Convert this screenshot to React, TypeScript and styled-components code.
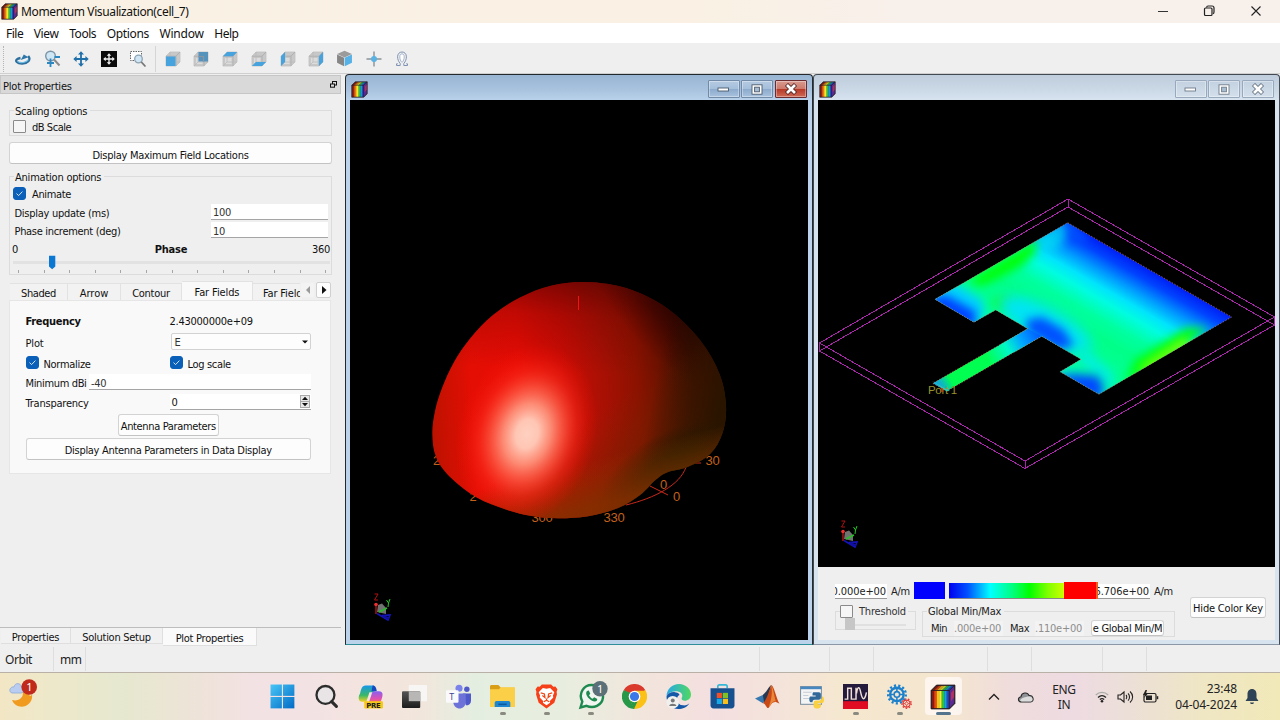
import React from "react";
import styled, { createGlobalStyle, css } from "styled-components";

const GlobalStyle = createGlobalStyle`
  * { box-sizing: border-box; }
  body { margin: 0; overflow: hidden; background: #efefef; }
  svg { display: block; flex: none; }
`;

const tahoma = css`font-family: "DejaVu Sans Condensed", "Liberation Sans", sans-serif; font-size: 11px;`;
const segoe = css`font-family: "Noto Sans", "Open Sans", sans-serif; font-size: 12px;`;

const Desktop = styled.div`
  width: 1280px; height: 720px; display: flex; flex-direction: column;
  background: #efefef; color: #111; overflow: hidden; white-space: nowrap;
  ${tahoma} letter-spacing: -0.27px;
`;

/* ---------- shared text ---------- */
const Text = styled.span<{ $ls?: number; $bold?: boolean }>`
  letter-spacing: ${(p) => p.$ls ?? -0.27}px;
  font-weight: ${(p) => (p.$bold ? 700 : 400)};
  line-height: 14px; padding-top: 2px;
`;

/* ---------- title, menu and tool bars ---------- */
const TitleBar = styled.header`
  height: 23px; flex: none; display: flex; align-items: center; padding: 0 0 0 1px;
  background: linear-gradient(90deg, #f9f1e3 0%, #faf1e4 54%, #f8f0ea 70%, #f8f0eb 100%);
  ${segoe}
`;
const TitleText = styled.span`margin-left: 3px; letter-spacing: -0.37px; flex: 1;`;
const Caption = styled.div`display: flex; gap: 34px; padding-right: 17px; margin-top: -1px;`;
const MenuBar = styled.nav`
  height: 20px; flex: none; display: flex; align-items: center; background: #fff;
  padding-left: 6px; gap: 10.5px; ${segoe}
`;
const MenuItem = styled.span<{ $ls: number }>`letter-spacing: ${(p) => p.$ls}px; line-height: 20px; padding-top: 2px;`;
const ToolBar = styled.div`
  height: 31px; flex: none; display: flex; align-items: center; padding: 1px 0 0 3px;
  border-bottom: 1px solid #cfcfcf;
`;
const Grip = styled.i`width: 1px; height: 26px; border-left: 1px dotted #b5b5b5; margin-right: 5px;`;
const ToolButton = styled.span`
  width: 28.7px; height: 24px; display: flex; align-items: center; justify-content: center;
`;
const ToolSep = styled.i`width: 1px; height: 26px; background: #d5d5d5; margin: 0 2.5px 0 2.5px;`;

/* ---------- left dock ---------- */
const Main = styled.main`height: 571px; flex: none; display: flex;`;
const Dock = styled.aside`
  width: 345px; flex: none; display: flex; flex-direction: column;
  & ${Text} { padding-top: 4px; }
  & button { padding-top: 4px; }
`;
const DockTitle = styled.div`
  width: 341px; height: 19px; margin-top: 1px; display: flex; align-items: center; justify-content: space-between;
  background: #d9d9d9; border: 1px solid #c6c6c6; padding: 0 3px 0 2px;
`;
const DockBody = styled.div`width: 323px; margin: 10px 0 0 9px; height: 523px; flex: none; display: flex; flex-direction: column;`;
const Group = styled.section<{ $h: number }>`
  height: ${(p) => p.$h}px; flex: none; display: flex; flex-direction: column; position: relative;
  &::before { content: ""; position: absolute; inset: 6px 0 0 0; border: 1px solid #dcdcdc; }
  & > * { position: relative; }
`;
const Legend = styled.div<{ $ls?: number }>`
  align-self: flex-start; margin-left: 5px; padding: 0 3px 0 1px; height: 14px; line-height: 15px;
  background: #efefef; letter-spacing: ${(p) => p.$ls ?? -0.22}px;
`;
const CheckRow = styled.label<{ $gap?: number; $h?: number }>`
  display: flex; align-items: center; gap: ${(p) => p.$gap ?? 6}px; height: ${(p) => p.$h ?? 16}px; padding-left: 4px;
`;
const Box = styled.span<{ $on?: boolean }>`
  width: 13px; height: 13px; flex: none; border-radius: ${(p) => (p.$on ? 3 : 1)}px;
  background: ${(p) => (p.$on ? "#0a5fb8" : "#f6f6f6")};
  border: 1px solid ${(p) => (p.$on ? "#0a5fb8" : "#8a8a8a")};
  display: flex; align-items: center; justify-content: center;
`;
const Button = styled.button<{ $w: number; $h?: number }>`
  width: ${(p) => p.$w}px; height: ${(p) => p.$h ?? 22}px; flex: none; padding: 2px 0 0; ${tahoma}
  letter-spacing: -0.27px; color: #111; background: #fdfdfd; border: 1px solid #d3d3d3; border-bottom-color: #c3c3c3;
  border-radius: 3px; display: flex; align-items: center; justify-content: center; overflow: hidden;
  & > ${Text} { padding: 0; }
`;
const Spaced = styled.div<{ $top: number }>`margin-top: ${(p) => p.$top}px; display: flex; justify-content: center;`;
const FieldRow = styled.div<{ $h: number }>`
  height: ${(p) => p.$h}px; flex: none; display: flex; align-items: center; justify-content: space-between; padding: 0 4px 0 5.5px;
`;
const Field = styled.div<{ $w: number; $h?: number }>`
  width: ${(p) => p.$w}px; height: ${(p) => p.$h ?? 16}px; background: #fff; border-bottom: 1px solid #a5a5a5;
  display: flex; align-items: center; padding: 3px 0 0 2px; color: #333;
`;
const PhaseRow = styled.div`
  height: 18px; flex: none; display: grid; grid-template-columns: 1fr auto 1fr; align-items: center; padding: 0 2px 0 3px;
  & > :last-child { justify-self: end; }
`;
const SliderWrap = styled.div`margin-top: -2px; height: 20px;`;
const TabStrip = styled.div`height: 19px; margin-top: 6px; flex: none; display: flex; align-items: flex-end; padding-left: 1px;`;
const Tab = styled.span<{ $w: number; $on?: boolean }>`
  width: ${(p) => p.$w}px; height: ${(p) => (p.$on ? 19 : 17)}px; flex: none; overflow: hidden;
  display: flex; align-items: center; justify-content: center; padding-bottom: ${(p) => (p.$on ? 1 : 0)}px;
  background: ${(p) => (p.$on ? "#f9f9f9" : "#f2f2f2")};
  border: solid #e2e2e2; border-width: 1px 1px 0 0;
`;
const CutTab = styled(Tab)`justify-content: flex-start; padding-left: 10px; border-right: 0;`;
const Scroller = styled.span<{ $on?: boolean }>`
  width: 15px; height: 16px; margin-bottom: 2px; margin-left: ${(p) => (p.$on ? 1 : -2)}px; display: flex; align-items: center; justify-content: center;
  background: ${(p) => (p.$on ? "#fdfdfd" : "#f3f3f3")}; border: 1px solid ${(p) => (p.$on ? "#d0d0d0" : "#f0f0f0")}; border-radius: 2px;
`;
const Pane = styled.section`
  width: 322px; height: 174px; flex: none; background: #f9f9f9; border: 1px solid #e6e6e6;
  padding: 8px 19px 0 15.5px; display: flex; flex-direction: column;
`;
const PaneRow = styled.div<{ $h: number }>`
  height: ${(p) => p.$h}px; flex: none; display: grid; grid-template-columns: 144px 1fr; align-items: center;
`;
const MinRow = styled.div`height: 18px; flex: none; display: flex; align-items: center; justify-content: space-between;`;
const PaneCheck = styled(CheckRow)`padding-left: 0;`;
const Select = styled.div`
  height: 17px; border: 1px solid #d2d2d2; border-radius: 2px; background: #fdfdfd; margin-left: 1px;
  display: flex; align-items: center; justify-content: space-between; padding: 1px 2px 0 3px; color: #333;
`;
const Spin = styled.div`
  height: 16px; background: #fff; border-bottom: 1px solid #a5a5a5; display: flex; align-items: center;
  justify-content: space-between; padding: 0 1px 0 2px;
`;
const BottomTabs = styled.div`width: 341px; height: 19px; border-top: 1px solid #bdbdbd; display: flex; padding-left: 1px;`;
const BottomTab = styled.span<{ $w: number; $on?: boolean }>`
  width: ${(p) => p.$w}px; height: ${(p) => (p.$on ? 18 : 16)}px; display: flex; align-items: center; justify-content: center;
  background: ${(p) => (p.$on ? "#fafafa" : "#f1f1f1")}; border: solid #dfdfdf; border-width: 0 1px 1px 0; padding-top: 3px;
`;

/* ---------- document windows ---------- */
const Win = styled.section<{ $w: number; $active?: boolean }>`
  width: ${(p) => p.$w}px; height: 571px; flex: none; display: flex; flex-direction: column; padding: 0 4px 4px;
  border: 1px solid ${(p) => (p.$active ? "#24292e" : "#444a52")}; border-bottom-color: ${(p) => (p.$active ? "#2f8f98" : "#8c97a6")};
  border-radius: 4px 4px 0 0;
  background: ${(p) => (p.$active
    ? "linear-gradient(180deg,#98b5d3 0,#a9c3df 15px,#b9d1ea 25px,#bcd3eb 60px,#bad2ea 100%)"
    : "linear-gradient(180deg,#bfcddc 0,#cbd8e6 15px,#d7e3ef 25px,#d7e4f0 100%)")};
`;
const WinBar = styled.div`height: 25px; flex: none; display: flex; align-items: center; padding: 3px 1.5px 0 1px;`;
const WinSpacer = styled.span`flex: 1;`;
const WinButton = styled.span<{ $close?: boolean; $pale?: boolean }>`
  width: 32px; height: 18px; margin-left: 1.5px; border-radius: 1px; display: flex; align-items: center; justify-content: center;
  border: 1px solid ${(p) => (p.$pale ? "#98a9bd" : p.$close ? "#6b2b2f" : "#718aa8")};
  box-shadow: inset 0 0 0 1px rgba(255,255,255,.35);
  background: ${(p) => (p.$pale
    ? "linear-gradient(#c3d1e0,#d3dfeb)"
    : p.$close ? "linear-gradient(#d99a90 0,#cd7a6c 48%,#b63a28 52%,#cf6a55 100%)" : "linear-gradient(#b5cae1 0,#a5bfdb 48%,#8dabcd 52%,#a8c2de 100%)")};
`;
const Canvas = styled.div<{ $h: number }>`height: ${(p) => p.$h}px; flex: none; background: #000;`;

/* ---------- colour key ---------- */
const KeyPanel = styled.div`height: 73px; flex: none; background: #efefef; display: flex; padding-left: 17px; align-items: flex-start;`;
const KeyMain = styled.div`width: 355px; padding-top: 15px; flex: none; color: #222;`;
const KeyRow = styled.div`display: flex; align-items: center; height: 17px;`;
const KeyField = styled.div<{ $w: number }>`
  width: ${(p) => p.$w}px; height: 15px; background: #fff; border-bottom: 1px solid #999; overflow: hidden; line-height: 15px;
  display: flex; justify-content: flex-end; padding-right: 1px; margin-top: 1px; letter-spacing: -0.1px;
`;
const Unit = styled.span`margin: 1px 3px 0 4px; width: 20px;`;
const Solid = styled.i<{ $w: number; $c: string }>`width: ${(p) => p.$w}px; height: 17px; background: ${(p) => p.$c};`;
const Ramp = styled.i`
  width: 115px; height: 16px; margin-left: 4px; border-bottom: 1px solid #888;
  background: linear-gradient(90deg,#0000f0 0,#0050ff 16%,#00ffff 36%,#00ff80 55%,#00ff00 70%,#80ff00 86%,#ccff00 100%);
`;
const GroupsRow = styled.div`display: flex; margin-top: 5px; gap: 6px;`;
const ThresholdBox = styled.div`
  width: 81px; height: 26px; position: relative; display: flex; flex-direction: column;
  &::before { content: ""; position: absolute; inset: 7px 0 0 0; border: 1px solid #dcdcdc; }
  & > * { position: relative; }
`;
const ThresholdLabel = styled.label`display: flex; align-items: center; gap: 6px; height: 14px; margin-left: 5px; width: 68px; background: #efefef; color: #333;`;
const MiniTrack = styled.div`
  width: 61px; height: 12px; margin-left: 10px; display: flex; align-items: center;
  background: linear-gradient(#e0e0e0,#e0e0e0) 0 6px / 100% 2px no-repeat;
  &::before { content: ""; width: 10px; height: 12px; background: #c6c6c6; }
`;
const GlobalBox = styled(ThresholdBox)`width: 253px; height: 33px;`;
const GlobalRow = styled.div`height: 16px; margin: 2px 0 0 9px; display: flex; align-items: center;`;
const Ghost = styled.span<{ $w: number; $m: string }>`
  width: ${(p) => p.$w}px; height: 15px; line-height: 15px; margin: ${(p) => p.$m}; color: #8e8e8e; background: #f3f3f3; letter-spacing: -0.25px; overflow: hidden;
`;
const HideWrap = styled.div`padding-top: 30px;`;

/* ---------- status bar ---------- */
const StatusBar = styled.div`height: 28px; flex: none; display: flex; align-items: center; border-bottom: 1px solid #b9b0a8; padding-left: 5px; ${segoe}`;
const StatusCell = styled.span<{ $w: number; $pad?: number }>`
  width: ${(p) => p.$w}px; height: 24px; display: flex; align-items: center; padding: 2px 0 0 ${(p) => p.$pad ?? 0}px; flex: none;
  border-right: 1px solid #dedede; letter-spacing: -0.42px; color: #222;
`;

/* ---------- taskbar ---------- */
const TaskBar = styled.footer`
  height: 47px; flex: none; display: flex; align-items: stretch; ${segoe}
  background: linear-gradient(90deg,#f2e6c4 0,#efe8c9 3%,#e6e8cf 9%,#e9e6d2 12%,#f0e2dc 17%,#f3e2e4 20%,#f3e2e4 24%,#f4e4de 29%,#f1e6dc 33%,#e4eee0 37%,#e8eedf 44%,#f2e4dc 51%,#f4dfe0 56%,#f4e4d8 62%,#f5e8cf 66%,#f5e6cf 74%,#efdcdc 79%,#eedbe2 84%,#ecdfd8 88%,#efe6c4 94%,#f1e9b8 100%);
`;
const Weather = styled.div`width: 260.500px; flex: none; padding: 3px 0 0 9px;`;
const Apps = styled.div`width: 705px; display: flex; flex: none;`;
const AppSlot = styled.div<{ $active?: boolean }>`
  width: 44.05px; flex: none; height: 47px; display: flex; align-items: center; justify-content: center; position: relative;
  ${(p) => p.$active && css`&::before { content: ""; position: absolute; inset: 4px 3px 5px 4px; border-radius: 4px; background: rgba(255,250,248,.75); }`}
  & > svg { position: relative; }
`;
const Dot = styled.i<{ $wide?: boolean }>`
  position: absolute; bottom: 5px; left: ${(p) => (p.$wide ? 15 : 19.5)}px;
  width: ${(p) => (p.$wide ? 15 : 6)}px; height: 3px; border-radius: 2px; background: ${(p) => (p.$wide ? "#54748e" : "#8a8a80")};
`;
const Tray = styled.div`flex: none; width: 314px; display: flex; align-items: center; padding-left: 21.500px; color: #222;`;
const CloudSlot = styled.span`margin-left: 16px;`;
const Lang = styled.div`width: 28px; margin-left: 15px; text-align: center; line-height: 15px; letter-spacing: -0.35px;`;
const TrayIcons = styled.div`display: flex; gap: 8px; margin-left: 17px; align-items: center;`;
const Clock = styled.div`width: 72px; margin-left: 6px; text-align: right; line-height: 15.5px; letter-spacing: -0.08px; flex: none;`;
const BellSlot = styled.span`margin-left: 8px;`;

/* ---------- icons ---------- */
const Rainbow = ({ s = 16 }: { s?: number }) => (
  <svg width={s} height={s} viewBox="0 0 24 24">
    <path d="M1 6L6 1H23V18L18 23H1Z" fill="#222" />
    <g>
      {["#8a1a10", "#e84810", "#f8c018", "#f0f030", "#30c040", "#10a8c8", "#2048d8"].map((c, i) => (
        <g key={i} fill={c}>
          <rect x={1.6 + i * 2.3} y="6" width="2.4" height="16.4" />
          <path d={`M${1.6 + i * 2.3} 6l4.6-4.4h2.4l-4.6 4.4z`} opacity=".8" />
        </g>
      ))}
    </g>
    <path d="M17.7 6L22.4 1.6V17.6L17.7 22.4Z" fill="#5a2a90" />
    <path d="M19.4 8L22.4 5V12L19.4 16Z" fill="#b03060" />
    <path d="M1 6L6 1H23V18L18 23H1ZM1 6H17.7L22.6 1.3M17.7 6V22.6" fill="none" stroke="#2a1a20" strokeWidth=".8" />
  </svg>
);

const faces: Record<string, string> = {
  front: "M1 5.5H10.5V15H1Z",
  back: "M5.5 1H15V10.5H5.5Z",
  top: "M1 5.2L5.2 1H15L11 5.2Z",
  bottom: "M1 15L5 11H15L11 15Z",
  left: "M1 5.2L5 1V11L1 15Z",
  right: "M11 5.2L15 1V11L11 15Z",
};
const FaceCube = ({ face }: { face: string }) => (
  <svg width="16" height="16" viewBox="0 0 16 16">
    <path d="M1 5.2L5 1H15V11L11 15H1Z" fill="#c8c8c8" stroke="#c0c0c0" strokeWidth=".8" strokeLinejoin="round" />
    <path d="M3 7H9.5V13H3Z" fill="#dcdcdc" />
    <path d="M1 5.2H11V15M11 5.2L15 1" fill="none" stroke="#b0b0b0" strokeWidth="1" />
    <path d="M5 1V11H15M5 11L1 15" fill="none" stroke="#bababa" strokeWidth=".8" />
    <path d={faces[face]} fill={face === "back" ? "#5593bd" : "#46a3de"} />
    {face === "back" && <path d="M5.500 5.500H10.500V10.500" fill="none" stroke="#8795a0" strokeWidth="1.200" />}
  </svg>
);
const IsoCube = () => (
  <svg width="17" height="17" viewBox="0 0 16 16">
    <path d="M8 .8L15 3.8L8 7L1 3.8Z" fill="#9b9b9b" />
    <path d="M1 4.2L7.6 7.2V15.4L1 12Z" fill="#868686" />
    <path d="M15 4.2L8.2 7.2V15.4L15 12Z" fill="#55b1e6" />
  </svg>
);
const arrows = "M8 .3L11 3.600H8.900V7.100H12.400V5L15.700 8L12.400 11V8.900H8.900V12.400H11L8 15.700L5 12.400H7.100V8.900H3.600V11L.3 8L3.600 5V7.100H7.100V3.600H5Z";
const Orbit = () => (
  <svg width="18" height="16" viewBox="0 0 18 16">
    <path d="M6.500 7C3 7.600 1.200 9.200 2.800 11C5 13.200 11.500 13.300 14.400 10.200C15.800 8.400 15.600 6.500 14.200 5" fill="none" stroke="#2c6f9e" strokeWidth="2.300" />
    <path d="M3.500 10.200C6.500 12.600 12 12 14.400 8.600" fill="none" stroke="#6fbce4" strokeWidth="1.100" />
    <path d="M6.800 9L9.800 3.500L14.500 6.200Z" fill="#2c76a8" />
  </svg>
);
const ZoomIcon = () => (
  <svg width="18" height="18" viewBox="0 0 18 18">
    <circle cx="7.500" cy="6" r="4.800" fill="#cfe6f5" stroke="#7d95a6" strokeWidth="1.400" />
    <path d="M11 9.500L16.500 15.500" stroke="#8b8b8b" strokeWidth="2" />
    <path d="M7.500 8.500V17M4 13H11M11.500 7H17" stroke="#2c86c0" strokeWidth="1.800" />
  </svg>
);
const PanIcon = () => <svg width="16" height="16" viewBox="0 0 16 16"><path d={arrows} fill="#1f6fa8" /></svg>;
const FitIcon = () => (
  <svg width="16" height="16" viewBox="0 0 16 16"><rect width="16" height="16" fill="#0c0c0c" /><g transform="translate(2 2) scale(.75)"><path d={arrows} fill="#f4f4f4" /></g></svg>
);
const ZoomArea = () => (
  <svg width="18" height="18" viewBox="0 0 18 18">
    <rect x="1.500" y="1.500" width="11" height="9" fill="#fff" stroke="#666" strokeDasharray="1.500 1" />
    <circle cx="9.500" cy="9" r="3.800" fill="#cfe5f3" stroke="#8ba3b2" strokeWidth="1.300" /><path d="M12.300 12L16.500 16.500" stroke="#777" strokeWidth="1.800" />
  </svg>
);
const PointIcon = () => (
  <svg width="16" height="16" viewBox="0 0 16 16"><path d="M8 .5V15.500M.5 8H15.500" stroke="#8a9298" strokeWidth="1.400" /><circle cx="8" cy="8" r="3" fill="#58b2e4" /></svg>
);
const LobeIcon = () => (
  <svg width="14" height="16" viewBox="0 0 14 16">
    <path d="M1.500 14.500H5.200V12.500C3.400 10.500 2.600 8 2.600 5.800C2.600 2.800 4.500 1 7 1S11.400 2.800 11.400 5.800C11.400 8 10.600 10.500 8.800 12.500V14.500H12.500V12.800H11.200M1.500 14.500V12.800H2.800" fill="none" stroke="#7f94b5" strokeWidth="1" />
    <path d="M4.800 5.800C4.800 3.700 5.700 2.900 7 2.900S9.200 3.700 9.200 5.800C9.200 8.200 8.500 10 7 11.300C5.500 10 4.800 8.200 4.800 5.800Z" fill="#fff" stroke="#9cacc6" strokeWidth=".9" />
  </svg>
);
const Tick = () => <svg width="9" height="9" viewBox="0 0 9 9"><path d="M1.500 4.600L3.600 6.600L7.400 2.600" fill="none" stroke="#cfe3f7" strokeWidth="1" /></svg>;
const Check = ({ on }: { on?: boolean }) => <Box $on={on}>{on && <Tick />}</Box>;

const PhaseSlider = () => (
  <svg width="323" height="20" viewBox="9 255 323 20">
    <rect x="13" y="261" width="317" height="3" fill="#e2e2e2" />
    {Array.from({ length: 13 }, (_, i) => <rect key={i} x={Math.round(18 + i * 25.6)} y="270" width="1" height="3" fill="#a6a6a6" />)}
    <path d="M49 255.800H55.300V266.500L52.150 269.300L49 266.500Z" fill="#0a78d2" />
  </svg>
);
const MinGlyph = ({ pale }: { pale?: boolean }) => <svg width="13" height="6"><rect x="1" y="2" width="10.500" height="3" fill="#fff" stroke={pale ? "#6d7a88" : "#4a5a6a"} strokeWidth=".9" /></svg>;
const MaxGlyph = ({ pale }: { pale?: boolean }) => {
  const c = pale ? "#6d7a88" : "#4a5a6a";
  return <svg width="12" height="11"><rect x="1" y=".8" width="10" height="9.400" fill="#fff" stroke={c} strokeWidth=".9" /><rect x="3.600" y="3.200" width="4.800" height="4.600" fill="#a9bdd2" stroke={c} strokeWidth=".9" /></svg>;
};
const CloseGlyph = ({ pale }: { pale?: boolean }) => (
  <svg width="14" height="12"><path d="M2.500 1.500L11.500 10.500M11.500 1.500L2.500 10.500" stroke={pale ? "#64717f" : "#4f2426"} strokeWidth="4.400" /><path d="M3 2L11 10M11 2L3 10" stroke="#fff" strokeWidth="2.700" /></svg>
);

/* ---------- radiation lobe ---------- */
const outline: [number, number][] = [
  [586.7, 282], [552, 285.5], [520, 297.5], [493, 315], [470.5, 338], [454, 362], [442, 388], [435, 411], [432.3, 434], [436, 457], [450, 477], [476.7, 497.5], [506, 509.5],
  [532, 516], [558, 518.3], [588, 516.3], [618, 508], [640, 495], [656, 479.5], [668, 472], [688, 466.8], [710, 454], [722.5, 433], [726, 406], [719.5, 374], [700, 340], [666.7, 308], [627.5, 288.5],
];
const smooth = (p: [number, number][]) => {
  const n = p.length;
  let d = `M${p[0][0]} ${p[0][1]}`;
  for (let i = 0; i < n; i++) {
    const a = p[(i + n - 1) % n], b = p[i], c = p[(i + 1) % n], e = p[(i + 2) % n];
    d += `C${b[0] + (c[0] - a[0]) / 6} ${b[1] + (c[1] - a[1]) / 6} ${c[0] - (e[0] - b[0]) / 6} ${c[1] - (e[1] - b[1]) / 6} ${c[0]} ${c[1]}`;
  }
  return d + "Z";
};
const Triad = ({ x, y }: { x: number; y: number }) => (
  <g transform={`translate(${x} ${y})`}>
    <path d="M4 11L8 9.500L12 14L12 20L3 18Z" fill="#6f7470" />
    <path d="M2 10V20" stroke="#c01818" strokeWidth="1.300" /><circle cx="2" cy="10.500" r="1.800" fill="#f03030" />
    <path d="M.5 0H4L.5 6H4" fill="none" stroke="#b01010" strokeWidth="1" />
    <path d="M5 18L13 14" stroke="#28c028" strokeWidth="1.500" />
    <path d="M12.500 6L14.500 9L16 5M14.500 9L14 13" fill="none" stroke="#20c820" strokeWidth="1" />
    <path d="M3 19.500L14 26L16 21L8 21.500" fill="none" stroke="#1414b8" strokeWidth="1.600" /><path d="M9 22L15 24.500" stroke="#1010a0" strokeWidth="2.400" />
  </g>
);
const Lobe = () => (
  <svg width="458" height="540" viewBox="350 100 458 540">
    <defs>
      <linearGradient id="base" gradientUnits="userSpaceOnUse" x1="432" y1="415" x2="726" y2="400">
        <stop offset="0" stopColor="#bd1200" /><stop offset=".14" stopColor="#e40e04" /><stop offset=".3" stopColor="#e80c04" />
        <stop offset=".45" stopColor="#cc0c04" /><stop offset=".58" stopColor="#aa1004" /><stop offset=".7" stopColor="#8c1200" /><stop offset=".8" stopColor="#641200" /><stop offset=".89" stopColor="#3c1000" /><stop offset="1" stopColor="#2c0c00" />
      </linearGradient>
      <radialGradient id="topshade" gradientUnits="userSpaceOnUse" cx="0" cy="0" r="1" gradientTransform="translate(690 312) rotate(42) scale(120 58)">
        <stop offset="0" stopColor="#180000" stopOpacity=".8" /><stop offset=".45" stopColor="#200000" stopOpacity=".5" /><stop offset="1" stopColor="#300000" stopOpacity="0" />
      </radialGradient>
      <linearGradient id="crown" gradientUnits="userSpaceOnUse" x1="565" y1="278" x2="560" y2="372">
        <stop offset="0" stopColor="#400000" stopOpacity=".6" /><stop offset=".4" stopColor="#500000" stopOpacity=".25" /><stop offset="1" stopColor="#500000" stopOpacity="0" />
      </linearGradient>
      <linearGradient id="lowshade" gradientUnits="userSpaceOnUse" x1="570" y1="430" x2="628" y2="515">
        <stop offset="0" stopColor="#7a2800" stopOpacity="0" /><stop offset=".5" stopColor="#6c2400" stopOpacity=".45" /><stop offset="1" stopColor="#402400" stopOpacity=".9" />
      </linearGradient>
      <radialGradient id="moss" gradientUnits="userSpaceOnUse" cx="0" cy="0" r="1" gradientTransform="translate(674 478) rotate(-30) scale(84 46)">
        <stop offset="0" stopColor="#122400" stopOpacity=".95" /><stop offset=".5" stopColor="#1c2000" stopOpacity=".7" /><stop offset="1" stopColor="#2c1800" stopOpacity="0" />
      </radialGradient>
      <linearGradient id="east" gradientUnits="userSpaceOnUse" x1="645" y1="435" x2="712" y2="448">
        <stop offset="0" stopColor="#2e1000" stopOpacity="0" /><stop offset=".6" stopColor="#2e1200" stopOpacity=".65" /><stop offset="1" stopColor="#281400" stopOpacity=".95" />
      </linearGradient>
      <linearGradient id="rim" gradientUnits="userSpaceOnUse" x1="535" y1="475" x2="547" y2="520">
        <stop offset="0" stopColor="#a03000" stopOpacity="0" /><stop offset="1" stopColor="#8a3000" stopOpacity=".8" />
      </linearGradient>
      <radialGradient id="glow" gradientUnits="userSpaceOnUse" cx="0" cy="0" r="1" gradientTransform="translate(527 434) rotate(16) scale(69 92)">
        <stop offset="0" stopColor="#ffd0c0" /><stop offset=".16" stopColor="#ffc6b4" /><stop offset=".34" stopColor="#ff947c" stopOpacity=".92" />
        <stop offset=".52" stopColor="#ff5c46" stopOpacity=".76" /><stop offset=".7" stopColor="#ff3020" stopOpacity=".48" /><stop offset=".86" stopColor="#ff1c10" stopOpacity=".2" /><stop offset="1" stopColor="#ff1408" stopOpacity="0" />
      </radialGradient>
    </defs>
    <g fill="#c4601a" fontFamily="Liberation Sans" fontSize="13">
      <text x="705.500" y="465">30</text><text x="673" y="501">0</text><text x="603.500" y="522">330</text>
      <text x="433" y="465">2</text><text x="469.500" y="501">2</text><text x="531.500" y="522">300</text>
    </g>
    <path d="M626 505C655 498 680 485 686 467M695 463L701 463M650 486L668 495" fill="none" stroke="#c8281a" strokeWidth="1" />
    <g>
      {["base", "crown", "topshade", "lowshade", "east", "moss", "rim", "glow"].map((f) => <path key={f} d={smooth(outline)} fill={`url(#${f})`} />)}
    </g>
    <text x="660" y="489" fill="#c4601a" fontFamily="Liberation Sans" fontSize="13">0</text>
    <path d="M578.500 296V310" stroke="#f01414" strokeWidth="1" />
    <Triad x={374} y={594} />
  </svg>
);

/* ---------- surface current patch ---------- */
const patchShape = "M1067.700 222.700L1231.700 317L1099 394.300L1060 371.700L1081 359.300L1041.700 336.300L946.700 391.300L932.700 383.300L1027.700 328.700L995.700 310L974 322.300L935 299.300Z";
const Patch = () => (
  <svg width="457" height="467" viewBox="818 100 457 467">
    <defs>
      <clipPath id="shape"><path d={patchShape} /></clipPath>
      <clipPath id="feedclip"><path d="M1027.700 328.700L1041.700 336.300L946.700 391.300L932.700 383.300Z" /></clipPath>
      <linearGradient id="across" x1="0" y1="0" x2="0" y2="1">
        <stop offset="0" stopColor="#0020f4" /><stop offset=".08" stopColor="#0044ff" /><stop offset=".18" stopColor="#0098ff" /><stop offset=".28" stopColor="#00e4fc" />
        <stop offset=".36" stopColor="#00fce0" /><stop offset=".48" stopColor="#00ffa0" /><stop offset=".6" stopColor="#00ff88" /><stop offset=".8" stopColor="#00ff98" /><stop offset="1" stopColor="#00f8c0" />
      </linearGradient>
      <linearGradient id="feed" gradientUnits="userSpaceOnUse" x1="939" y1="387" x2="1036" y2="331">
        <stop offset="0" stopColor="#10b0e0" /><stop offset=".12" stopColor="#00ff50" /><stop offset=".5" stopColor="#00ff50" /><stop offset=".7" stopColor="#00f8c8" /><stop offset=".84" stopColor="#00a8ff" /><stop offset="1" stopColor="#0060ff" />
      </linearGradient>
      <filter id="b1" x="-80%" y="-80%" width="260%" height="260%" colorInterpolationFilters="sRGB"><feGaussianBlur stdDeviation="7" /></filter>
      <filter id="b2" x="-80%" y="-80%" width="260%" height="260%" colorInterpolationFilters="sRGB"><feGaussianBlur stdDeviation="5" /></filter>
    </defs>
    <path d="M1068 199L1274.500 317V325L1025 468.500L819.500 351V343ZM1068 207L1274.500 325M1068 199V207L819.500 351M1025 461V468M1025 461L819.500 343M1025 461L1274.500 317" fill="none" stroke="#a824a8" strokeWidth="1" shapeRendering="crispEdges" />
    <g clipPath="url(#shape)">
      <g transform="matrix(164 94.300 -132.700 76.600 1067.700 222.700)"><rect x="-.1" y="0" width="1.200" height="1.050" fill="url(#across)" /></g>
      <path d="M1034 236L1064 216L1070 232L1056 250L1040 250Z" fill="#00e8f0" filter="url(#b2)" opacity=".7" />
      <path d="M1062 222L1072 220L1090 240L1074 242Z" fill="#0058ff" filter="url(#b2)" opacity=".8" />
      <path d="M968 282L1036 238L1036 252L1022 266L982 286Z" fill="#00ff08" filter="url(#b2)" />
      <ellipse cx="1003" cy="303" rx="11" ry="8" fill="#10ff30" filter="url(#b2)" />
      <path d="M932 290L956 284L982 300L984 312L974 326L932 303Z" fill="#00d0ff" filter="url(#b2)" />
      <path d="M932 298L946 295L976 312L974 330L930 305Z" fill="#0040ff" filter="url(#b2)" />
      <ellipse cx="1045" cy="324" rx="52" ry="17" transform="rotate(28 1045 324)" fill="#00e4f4" filter="url(#b1)" />
      <path d="M1026 320L1042 317L1064 330L1074 346L1058 350L1028 332Z" fill="#0050ff" filter="url(#b2)" />
      <path d="M1076 348L1090 352L1112 372L1114 388L1100 382L1080 360Z" fill="#00f0d8" filter="url(#b2)" />
      <path d="M1056 376L1074 374L1098 376L1104 388L1098 402Z" fill="#0048ff" filter="url(#b2)" />
      <path d="M1124 384L1135 360L1186 328L1208 328L1160 362Z" fill="#00ff10" filter="url(#b2)" />
      <path d="M1138 376L1192 344L1184 338L1144 364Z" fill="#80ff00" filter="url(#b2)" />
      <path d="M1020 325L1046 334L950 396L925 384Z" fill="url(#feed)" clipPath="url(#feedclip)" />
      <path d="M932 384L942 380L948 388L944 392Z" fill="#1890e0" filter="url(#b2)" opacity=".7" />
    </g>
    <path d={patchShape} fill="none" stroke="#d08060" strokeWidth=".8" strokeDasharray="1.500 1.500" opacity=".8" />
    <text x="928" y="393.500" fontFamily="Liberation Sans" fontSize="11.500" fill="#98922a" letterSpacing="-.3">Port 1</text>
    <path d="M932 381L941 386L950 391L946.700 391.300Z" fill="#30c8b0" />
    <path d="M942 388V392" stroke="#e03010" strokeWidth="1.500" />
    <Triad x={841} y={521} />
  </svg>
);

/* ---------- taskbar icons ---------- */
const Ico = ({ children, s = 25 }: { children: React.ReactNode; s?: number }) => <svg width={s} height={s} viewBox="0 0 24 24">{children}</svg>;
const gear = (cx: number, cy: number, r: number, n: number, c: string) => (
  <g stroke={c} fill="none">
    <circle cx={cx} cy={cy} r={r * 0.68} strokeWidth={r * 0.24} />
    <circle cx={cx} cy={cy} r={r * 0.28} strokeWidth={r * 0.16} />
    <circle cx={cx} cy={cy} r={r * 0.9} strokeWidth={r * 0.24} strokeDasharray={`${(r * 5.65) / n / 2} ${(r * 5.65) / n / 2}`} />
    <path d={`M${cx - r * 0.65} ${cy}H${cx - r * 0.3}M${cx + r * 0.3} ${cy}H${cx + r * 0.65}M${cx} ${cy - r * 0.65}V${cy - r * 0.3}M${cx} ${cy + r * 0.3}V${cy + r * 0.65}`} strokeWidth={r * 0.16} />
  </g>
);
const Windows = () => (
  <Ico>
    <defs><linearGradient id="wg" gradientUnits="userSpaceOnUse" x1="0" y1="0" x2="24" y2="24"><stop offset="0" stopColor="#48c8f8" /><stop offset="1" stopColor="#0068c4" /></linearGradient></defs>
    <g fill="url(#wg)"><path d="M.5 .5H11.400V11.400H.5Z" /><path d="M12.500 .5H23.400V11.400H12.500Z" /><path d="M.5 12.500H11.400V23.400H.5Z" /><path d="M12.500 12.500H23.400V23.400H12.500Z" /></g>
  </Ico>
);
const Search = () => <Ico><circle cx="11" cy="10.500" r="8.600" fill="#e9e4e6" stroke="#2c2c2c" strokeWidth="2.200" /><path d="M17 17L21.500 21.500" stroke="#2c2c2c" strokeWidth="3" strokeLinecap="round" /></Ico>;
const Copilot = () => (
  <Ico>
    <defs>
      <linearGradient id="cp" x1="0" y1="0" x2="0" y2="1"><stop offset="0" stopColor="#1898e8" /><stop offset=".6" stopColor="#38b868" /><stop offset="1" stopColor="#f0d020" /></linearGradient>
      <linearGradient id="cq" x1="0" y1="0" x2="0" y2="1"><stop offset="0" stopColor="#8860f0" /><stop offset=".6" stopColor="#e050b0" /><stop offset="1" stopColor="#f88040" /></linearGradient>
    </defs>
    <path d="M7 1.500H14C17 1.500 17 6 15.500 8H11L8 17H4C0 17 0 12 2 9C3 5 4 1.500 7 1.500Z" fill="url(#cp)" />
    <path d="M14 1.500C17 1.500 17.500 4 18 7H13Z" fill="#1848c0" />
    <path d="M16 7H20C24.500 7 24 11 22.500 15C21.500 18 20 19 18 19H10L13 10C13.500 8 14 7 16 7Z" fill="url(#cq)" />
    <rect x="6" y="16.500" width="18" height="7" rx="1" fill="#f8c818" /><text x="8" y="22.600" fontSize="6.600" fontWeight="700" fontFamily="DejaVu Sans" fill="#222" textLength="13.500">PRE</text>
  </Ico>
);
const TaskView = () => (
  <Ico>
    <defs><linearGradient id="tv" x1="0" y1="0" x2="0" y2="1"><stop offset="0" stopColor="#555" /><stop offset="1" stopColor="#1c1c1c" /></linearGradient></defs>
    <rect x="6.500" y="1" width="17.500" height="15.500" rx="1" fill="#f8f6f4" /><rect x="0" y="7" width="17.500" height="16" rx="1" fill="url(#tv)" /><rect x="6.500" y="7" width="11" height="9.500" fill="#b9b7b5" />
  </Ico>
);
const Teams = () => (
  <Ico>
    <circle cx="12.500" cy="4" r="3.400" fill="#7b83eb" /><circle cx="20" cy="5" r="2.600" fill="#5059c9" />
    <path d="M16 9H24V16C24 19 22 20.500 19 20.500Z" fill="#5059c9" /><path d="M7 9H19V17C19 21 16 23.500 13 23.500S7 21 7 17Z" fill="#6c72d8" />
    <rect x="0" y="6" width="12" height="12" rx="1" fill="#fafafc" /><text x="3" y="15" fontSize="8.500" fontFamily="Noto Sans" fill="#3f4490">T</text>
  </Ico>
);
const Folder = () => <Ico><path d="M0 2.500C0 1.500 .6 1 1.500 1H8L10.500 3.500H22.500C23.500 3.500 24 4 24 5V8H0Z" fill="#d99e15" /><path d="M0 5H8.500L10.500 3H24V22H0Z" fill="#fbcf48" /><path d="M4.500 22V18C4.500 17 5.200 16.200 6.200 16.200H17.800C18.800 16.200 19.500 17 19.500 18V22Z" fill="#1f86d0" /><path d="M8 19.500H16" stroke="#0c5a9c" strokeWidth="1.500" /></Ico>;
const Brave = () => (
  <Ico>
    <path d="M7.500 .5H16.500L18.500 2.600L20.500 2.400L22.500 5L21.700 7.500L22 10L19.500 18L12 23.500L4.500 18L2 10L2.300 7.500L1.500 5L3.500 2.400L5.500 2.600Z" fill="#f5401a" />
    <path d="M12 4.500L15.500 3.800L19.500 8L18.200 11L18.500 13L15 16.500L15.500 18L12 20.500L8.500 18L9 16.500L5.500 13L5.800 11L4.500 8L8.500 3.800Z" fill="#fff" />
    <path d="M6.500 8.500L10 9.500L10.500 13L8 11M17.500 8.500L14 9.500L13.500 13L16 11M12 14V15.500M9.500 17L12 15.500L14.500 17" fill="none" stroke="#f04818" strokeWidth="1.200" />
  </Ico>
);
const WhatsApp = () => (
  <svg width="34" height="32" viewBox="-1 1 34 32">
    <path d="M5.500 27.500L7.300 21.500C3 13 9 5 16.500 5C24 5 28.500 11 28 17.500C27 25.500 18.500 29 11.500 25.800Z" fill="#f1f6f0" stroke="#1e8a50" strokeWidth="2.400" />
    <path d="M12 11C10.500 12.500 11 15.500 14 18.500C17 21.500 20 22.200 21.800 20.800L22.300 19L19.200 17.300L17.600 18.800C16 18 14.800 16.800 14 15.200L15.300 13.700L13.800 10.600Z" fill="#1e8a50" />
    <circle cx="25" cy="8.800" r="7.700" fill="#5c7078" /><text x="22.100" y="12.800" fontSize="11" fontFamily="Noto Sans" fill="#fff">1</text>
  </svg>
);
const Chrome = () => (
  <Ico>
    <path d="M12 12L1.600 6A12 12 0 0 1 22.400 6Z" fill="#d93a2c" /><path d="M12 12L22.400 6A12 12 0 0 1 12 24Z" fill="#fbc116" /><path d="M12 12L12 24A12 12 0 0 1 1.600 6Z" fill="#279847" />
    <path d="M12 6.500H22.700L17 15Z" fill="#fbc116" /><path d="M1.600 6L7.200 15L12 10Z" fill="#279847" /><path d="M7 14.500L12 17.500L17 14.500L12 24Z" fill="#fbc116" /><path d="M7 14.500L12 17.500L15 16.500L11.500 24Z" fill="#279847" />
    <circle cx="12" cy="12" r="5.600" fill="#fff" /><circle cx="12" cy="12" r="4.400" fill="#3b78e7" />
  </Ico>
);
const Edge = () => (
  <Ico>
    <defs><linearGradient id="eg" x1="0" y1="0" x2="1" y2="0"><stop offset="0" stopColor="#28a8e8" /><stop offset="1" stopColor="#50d860" /></linearGradient></defs>
    <path d="M.5 12C.5 5 6 0 12.500 0S24 5 24 10C24 14 21 16 18 16S14.500 14 15.500 12.500C16.500 9 13 7 9.500 7C5 7 1 10 .5 12Z" fill="url(#eg)" />
    <path d="M.5 12C1.500 9 5 7.500 8.500 7.800C12 8 13 10 13 10.500C9 12 9.500 20 16.500 20.500C19 20.800 21.500 19.500 22.500 18.500C20 22.500 16 24 12 24C5 24 .5 18.500 .5 12Z" fill="#1458a8" />
    <circle cx="6.500" cy="17.500" r="6" fill="#f0f0ee" /><circle cx="6.500" cy="15.800" r="1.900" fill="#777" /><path d="M3 21C3.500 18.200 9.500 18.200 10 21Z" fill="#777" />
  </Ico>
);
const Store = () => (
  <Ico>
    <path d="M7.500 4V2.500C7.500 1.300 8 .8 9 .8H15C16 .8 16.500 1.300 16.500 2.500V4" fill="none" stroke="#38b8d8" strokeWidth="1.600" /><path d="M.5 4H23.500V20.500C23.500 22.500 22.500 23.500 20.500 23.500H3.500C1.500 23.500 .5 22.500 .5 20.500Z" fill="#17508e" />
    <rect x="6.500" y="8.500" width="5" height="5" fill="#f05028" /><rect x="12.300" y="8.500" width="5" height="5" fill="#80c020" /><rect x="6.500" y="14.200" width="5" height="5" fill="#18a8e8" /><rect x="12.300" y="14.200" width="5" height="5" fill="#f8c018" />
  </Ico>
);
const Matlab = () => <Ico><path d="M0 14L7.500 10.500L12 15L7.500 18.500Z" fill="#3878b0" /><path d="M7.500 10.500C11 8 13 3 15.500 1L12 15L9 19Z" fill="#283850" /><path d="M15.500 1C14 6 11 16 7.500 18.500C10 18 11 24 13 23C16 19 17.500 15 23.500 19C20 13 18.500 2 15.500 1Z" fill="#c84818" /><path d="M15.500 1C17 8 16 14 13 23C16 19 17.500 15 20 17C18.500 12 17.500 3 15.500 1Z" fill="#e88838" /></Ico>;
const Python = () => (
  <Ico>
    <rect x="1.500" y="2.500" width="20" height="17" fill="#f4f4f4" stroke="#7c8ea0" /><rect x="1.500" y="2.500" width="20" height="2.500" fill="#4888c0" /><path d="M4 8H12M4 11H9M4 14H10" stroke="#c4ccd4" strokeWidth="1" />
    <path d="M14 8H19C20.500 8 21 9 21 10V13C21 14.500 20 15 19 15H15C13.500 15 13 16 13 17.500H11C9.500 17 9.500 12 11 12H16V11H13V9.500C13 8.500 13.500 8 14 8Z" fill="#31689a" />
    <path d="M22 12H23C24.500 14 24.500 18 22 18.500H18V19.500H21V21C21 23 19 23.500 17.500 23.500S14 23 14 21V18C14 16.500 15 15.800 16 15.800H20C21.500 15.500 22 14.500 22 12Z" fill="#f8d040" />
  </Ico>
);
const Ads = () => <Ico><rect width="24" height="24" fill="#241a3c" /><rect y="16.500" width="24" height="7.500" fill="#e00c24" /><path d="M1.500 14.500H4.500V4H8V14.500H12.500V3.500M13 9C14 2 15.800 2 17 8S20.500 18 22.500 8" fill="none" stroke="#f0e0d8" strokeWidth="1.400" /></Ico>;
const Gears = () => <Ico>{gear(9.5, 10, 9.5, 13, "#1c80cc")}{gear(18.8, 18.8, 5, 9, "#e03838")}</Ico>;
const CubeBig = () => <Rainbow s={26} />;

const apps: { icon: React.FC; dot?: boolean; active?: boolean }[] = [
  { icon: Windows }, { icon: Search }, { icon: Copilot }, { icon: TaskView }, { icon: Teams }, { icon: Folder, dot: true }, { icon: Brave, dot: true }, { icon: WhatsApp, dot: true },
  { icon: Chrome }, { icon: Edge }, { icon: Store }, { icon: Matlab }, { icon: Python }, { icon: Ads, dot: true }, { icon: Gears, dot: true }, { icon: CubeBig, active: true },
];

const menus: [string, number][] = [["File", -0.5], ["View", -0.32], ["Tools", -0.45], ["Options", -0.33], ["Window", -0.2], ["Help", -0.5]];

const WindowFrame = ({ pale, width, children }: { pale?: boolean; width: number; children: React.ReactNode }) => (
  <Win $w={width} $active={!pale}>
    <WinBar>
      <Rainbow s={17} />
      <WinSpacer />
      <WinButton $pale={pale}><MinGlyph pale={pale} /></WinButton>
      <WinButton $pale={pale}><MaxGlyph pale={pale} /></WinButton>
      <WinButton $pale={pale} $close><CloseGlyph pale={pale} /></WinButton>
    </WinBar>
    {children}
  </Win>
);

export default function App() {
  return (
    <Desktop>
      <GlobalStyle />
      <TitleBar>
        <Rainbow s={17} />
        <TitleText>Momentum Visualization(cell_7)</TitleText>
        <Caption>
          <svg width="12" height="12"><path d="M1 6.500H11" stroke="#333" /></svg>
          <svg width="12" height="12"><rect x="1.500" y="3" width="7.500" height="7.500" rx="1" fill="none" stroke="#222" strokeWidth="1.200" /><path d="M3.500 2.500C3.800 1 4.500 1 5 1H9C10.500 1 11 1.500 11 3V7C11 8 10.500 8.500 10 8.600" fill="none" stroke="#222" strokeWidth="1.200" /></svg>
          <svg width="14" height="12"><path d="M2.500 1.500L11.500 10.500M11.500 1.500L2.500 10.500" stroke="#222" strokeWidth="1.100" /></svg>
        </Caption>
      </TitleBar>
      <MenuBar>{menus.map(([m, ls]) => <MenuItem key={m} $ls={ls}>{m}</MenuItem>)}</MenuBar>
      <ToolBar>
        <Grip />
        <ToolButton><Orbit /></ToolButton><ToolButton><ZoomIcon /></ToolButton><ToolButton><PanIcon /></ToolButton><ToolButton><FitIcon /></ToolButton><ToolButton><ZoomArea /></ToolButton>
        <ToolSep />
        {["front", "back", "top", "bottom", "left", "right"].map((f) => <ToolButton key={f}><FaceCube face={f} /></ToolButton>)}
        <ToolButton><IsoCube /></ToolButton><ToolButton><PointIcon /></ToolButton><ToolButton><LobeIcon /></ToolButton>
      </ToolBar>

      <Main>
        <Dock>
          <DockTitle>
            <Text $ls={-0.2}>Plot Properties</Text>
            <svg width="7" height="7"><rect x="2.500" y=".5" width="4" height="3.500" fill="none" stroke="#111" /><rect x=".5" y="3" width="4" height="3.200" fill="#d9d9d9" stroke="#111" /></svg>
          </DockTitle>
          <DockBody>
            <Group $h={32}>
              <Legend>Scaling options</Legend>
              <CheckRow><Check /><Text $ls={-0.45}>dB Scale</Text></CheckRow>
            </Group>
            <Spaced $top={6}><Button $w={323}>Display Maximum Field Locations</Button></Spaced>
            <Spaced $top={6} />
            <Group $h={105}>
              <Legend>Animation options</Legend>
              <CheckRow $h={18}><Check on /><Text $ls={-0.35}>Animate</Text></CheckRow>
              <FieldRow $h={19}><Text $ls={-0.28}>Display update (ms)</Text><Field $w={117}>100</Field></FieldRow>
              <FieldRow $h={18}><Text $ls={-0.31}>Phase increment (deg)</Text><Field $w={117}>10</Field></FieldRow>
              <PhaseRow><Text>0</Text><Text $bold $ls={-0.2}>Phase</Text><Text>360</Text></PhaseRow>
              <SliderWrap><PhaseSlider /></SliderWrap>
            </Group>
            <TabStrip>
              <Tab $w={58}><Text $ls={-0.38}>Shaded</Text></Tab>
              <Tab $w={53}><Text $ls={0}>Arrow</Text></Tab>
              <Tab $w={61}><Text>Contour</Text></Tab>
              <Tab $w={71} $on><Text $ls={-0.1}>Far Fields</Text></Tab>
              <CutTab $w={49}><Text $ls={-0.15}>Far Field</Text></CutTab>
              <Scroller><svg width="6" height="8"><path d="M5 0V8L1 4Z" fill="#9a9a9a" /></svg></Scroller>
              <Scroller $on><svg width="6" height="8"><path d="M1 0V8L5.500 4Z" fill="#111" /></svg></Scroller>
            </TabStrip>
            <Pane>
              <PaneRow $h={22}><Text $bold $ls={-0.3}>Frequency</Text><Text $ls={-0.25}>2.43000000e+09</Text></PaneRow>
              <PaneRow $h={21}><Text $ls={-0.15}>Plot</Text><Select>E<svg width="6" height="4"><path d="M0 .5H6L3 3.500Z" fill="#111" /></svg></Select></PaneRow>
              <PaneRow $h={21}>
                <PaneCheck $gap={5}><Check on /><Text $ls={-0.3}>Normalize</Text></PaneCheck>
                <PaneCheck $gap={5}><Check on /><Text $ls={-0.33}>Log scale</Text></PaneCheck>
              </PaneRow>
              <MinRow><Text $ls={-0.35}>Minimum dBi</Text><Field $w={222}>-40</Field></MinRow>
              <PaneRow $h={21}><Text $ls={-0.22}>Transparency</Text>
                <Spin><Text>0</Text><svg width="10" height="13"><rect x=".5" y=".5" width="9" height="12" fill="#e8e8e8" stroke="#aaa" /><path d="M0 6.500H10" stroke="#aaa" /><path d="M2 5L5 1.800L8 5ZM2 8L5 11.200L8 8Z" fill="#111" /></svg></Spin>
              </PaneRow>
              <Spaced $top={2}><Button $w={101}><Text $ls={-0.35}>Antenna Parameters</Text></Button></Spaced>
              <Spaced $top={2}><Button $w={285}><Text $ls={-0.3}>Display Antenna Parameters in Data Display</Text></Button></Spaced>
            </Pane>
          </DockBody>
          <BottomTabs>
            <BottomTab $w={70}>Properties</BottomTab><BottomTab $w={92}>Solution Setup</BottomTab><BottomTab $w={94} $on>Plot Properties</BottomTab>
          </BottomTabs>
        </Dock>

        <WindowFrame width={468}><Canvas $h={540}><Lobe /></Canvas></WindowFrame>
        <WindowFrame width={467} pale>
          <Canvas $h={467}><Patch /></Canvas>
          <KeyPanel>
            <KeyMain>
              <KeyRow>
                <KeyField $w={52}>0.000e+00</KeyField><Unit>A/m</Unit>
                <Solid $w={31} $c="#0000ff" /><Ramp /><Solid $w={32} $c="#ff0000" /><Solid $w={2} $c="#f06020" />
                <KeyField $w={52}>6.706e+00</KeyField><Unit>A/m</Unit>
              </KeyRow>
              <GroupsRow>
                <ThresholdBox>
                  <ThresholdLabel><Check /><Text $ls={-0.2}>Threshold</Text></ThresholdLabel>
                  <MiniTrack />
                </ThresholdBox>
                <GlobalBox>
                  <Legend $ls={-0.21}>Global Min/Max</Legend>
                  <GlobalRow>
                    <Text $ls={-0.5}>Min</Text><Ghost $w={49} $m="0 7px 0 7px">.000e+00</Ghost>
                    <Text $ls={-0.5}>Max</Text><Ghost $w={49} $m="0 7px 0 6px">.110e+00</Ghost>
                    <Button $w={73} $h={16}><Text>e Global Min/M</Text></Button>
                  </GlobalRow>
                </GlobalBox>
              </GroupsRow>
            </KeyMain>
            <HideWrap><Button $w={76} $h={21}><Text $ls={-0.2}>Hide Color Key</Text></Button></HideWrap>
          </KeyPanel>
        </WindowFrame>
      </Main>

      <StatusBar>
        <StatusCell $w={49}>Orbit</StatusCell><StatusCell $w={32} $pad={6}>mm</StatusCell>
        <StatusCell $w={674} /><StatusCell $w={70} /><StatusCell $w={44} /><StatusCell $w={114} /><StatusCell $w={44} /><StatusCell $w={71} /><StatusCell $w={44} />
      </StatusBar>

      <TaskBar>
        <Weather>
          <svg width="32" height="32" viewBox="9 676 32 32">
            <path d="M22 690C30 690 29 700 32 694C34 708 16 711 12 700C20 702 25 696 22 690Z" fill="#f09a20" />
            <path d="M12 693C8 692 10 686 14 687C15 682 21 683 21.500 687C25 688 24 693 21 693Z" fill="#b8cdf0" stroke="#8ea8d8" strokeWidth=".8" />
            <circle cx="29.200" cy="687" r="7.800" fill="#c02a1c" /><text x="26.300" y="691" fontSize="11" fontFamily="Noto Sans" fill="#fff">1</text>
          </svg>
        </Weather>
        <Apps>
          {apps.map(({ icon: Icon, dot, active }, i) => (
            <AppSlot key={i} $active={active}><Icon />{(dot || active) && <Dot $wide={active} />}</AppSlot>
          ))}
        </Apps>
        <Tray>
          <svg width="14" height="10"><path d="M2 7.500L7 2.500L12 7.500" fill="none" stroke="#222" strokeWidth="1.300" /></svg>
          <CloudSlot><svg width="18" height="14" viewBox="0 0 18 14"><path d="M4.500 12C.8 12 .3 7.500 4 6.800C4.500 2.500 10.500 1.500 12 5.500C16.500 5 17.800 11.500 13.500 12Z" fill="#8f9296" stroke="#2b2b2b" strokeWidth="1.100" /><path d="M3 10.500C5 7 9 7.500 10.500 6.500C13 6 16 7 15.500 10C15 11.500 14 11.500 13 11.500H4.500Z" fill="#dcdcdc" /></svg></CloudSlot>
          <Lang>ENG<br />IN</Lang>
          <TrayIcons>
            <svg width="14" height="14" viewBox="0 0 14 14"><path d="M.8 5C4.500 1.500 9.500 1.500 13.200 5" fill="none" stroke="#aaa" strokeWidth="1.200" /><path d="M3 7.500C5.500 5.200 8.500 5.200 11 7.500M4.800 9.500C6.300 8.300 7.700 8.300 9.200 9.500" fill="none" stroke="#222" strokeWidth="1.300" /><circle cx="7" cy="11.300" r="1.300" fill="#222" /></svg>
            <svg width="17" height="14" viewBox="0 0 17 14"><path d="M1 5H3.500L7 2V12L3.500 9H1Z" fill="none" stroke="#222" strokeWidth="1.100" /><path d="M9 5C10 6 10 8 9 9M11 3.300C13 5 13 9 11 10.700M13 1.500C16.500 4.500 16.500 9.500 13 12.500" fill="none" stroke="#222" strokeWidth="1.100" /></svg>
            <svg width="17" height="14" viewBox="0 0 17 14"><rect x="2" y="3.500" width="12" height="8.500" rx="1.500" fill="none" stroke="#222" strokeWidth="1.200" /><rect x="4" y="5.500" width="6" height="4.500" fill="#222" /><path d="M15.500 6.200V9.200" stroke="#222" strokeWidth="1.500" /><path d="M3.500 0L1 5H3L2 8L6 3.500H4L5 0Z" fill="#222" /></svg>
          </TrayIcons>
          <Clock>23:48<br />04-04-2024</Clock>
          <BellSlot><svg width="14" height="18" viewBox="0 0 14 18"><path d="M7 1C10 1 11.500 3.500 11.500 6V10L13.500 13H.5L2.500 10V6C2.500 3.500 4 1 7 1Z" fill="#2f4356" /><path d="M5 14.500H9C8.800 16.500 5.200 16.500 5 14.500Z" fill="#2f4356" /></svg></BellSlot>
        </Tray>
      </TaskBar>
    </Desktop>
  );
}
